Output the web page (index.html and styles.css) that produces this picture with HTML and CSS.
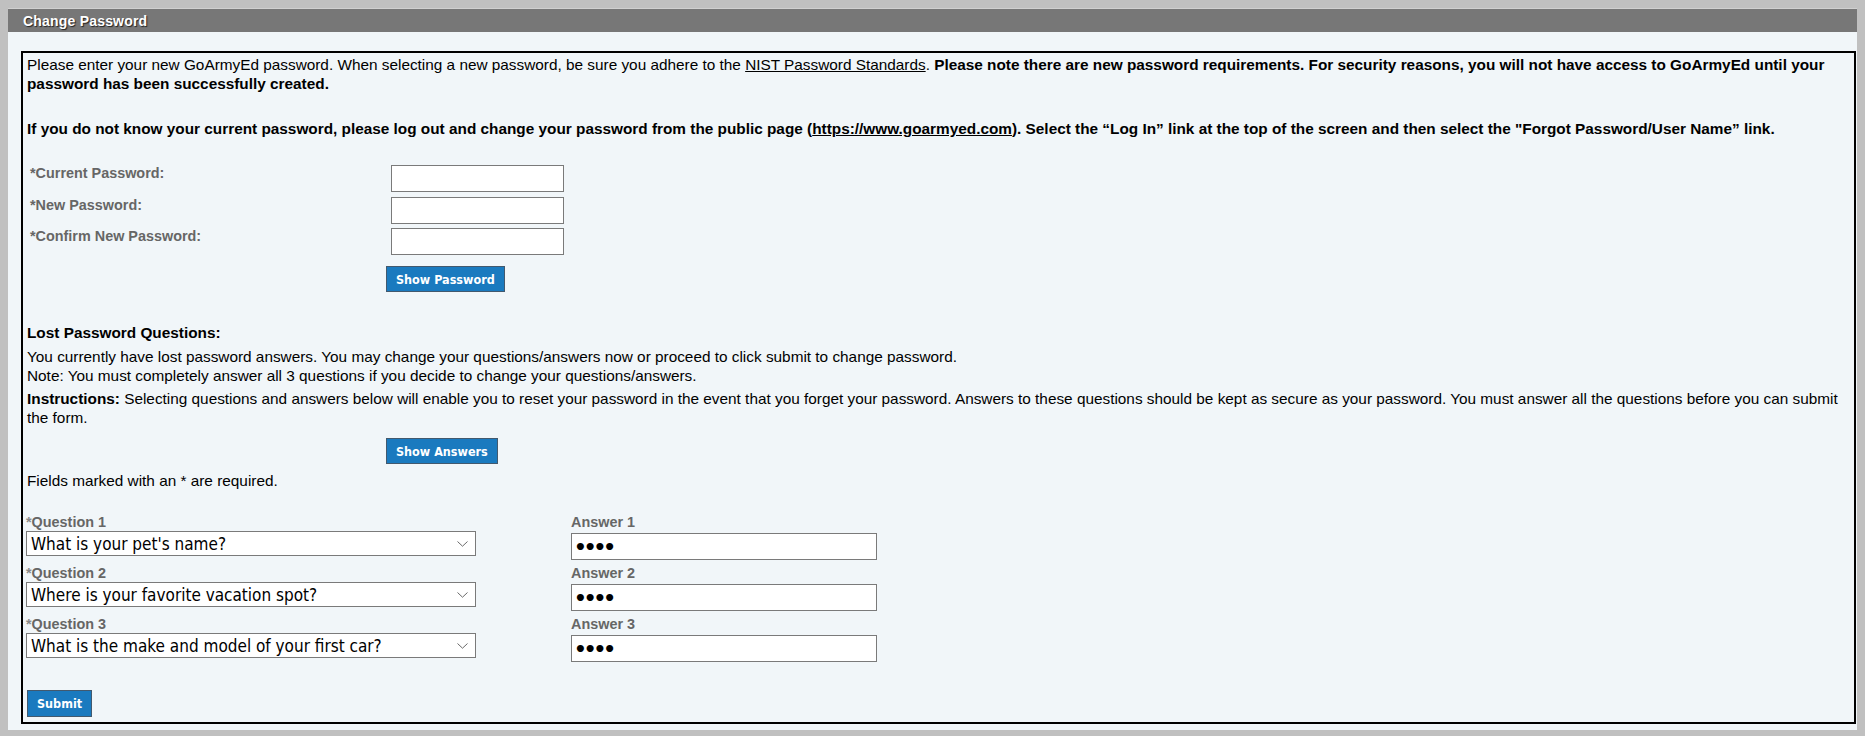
FILE: index.html
```html
<!DOCTYPE html>
<html lang="en">
<head>
    <meta charset="UTF-8">
    <meta name="viewport" content="width=device-width, initial-scale=1.0">
    <title>Change Password</title>
    <link rel="stylesheet" href="styles.css">
</head>
<body>
    <div class="panel">
        <div class="panel-title">Change Password</div>
        <div class="panel-body">
            <div class="content-box">
                <p class="intro">Please enter your new GoArmyEd password. When selecting a new password, be sure you adhere to the <a href="#">NIST Password Standards</a>. <strong>Please note there are new password requirements. For security reasons, you will not have access to GoArmyEd until your password has been successfully created.</strong></p>
                <p class="intro second"><strong>If you do not know your current password, please log out and change your password from the public page (<a href="#">https://www.goarmyed.com</a>). Select the &ldquo;Log In&rdquo; link at the top of the screen and then select the "Forgot Password/User Name&rdquo; link.</strong></p>

                <form id="change-password-form">
                    <div class="pw-grid">
                        <label for="current-password">*Current Password:</label>
                        <input type="password" id="current-password">

                        <label for="new-password">*New Password:</label>
                        <input type="password" id="new-password">

                        <label for="confirm-password">*Confirm New Password:</label>
                        <input type="password" id="confirm-password">
                    </div>
                    <div class="btn-row">
                        <button type="button" class="btn">Show Password</button>
                    </div>

                    <h3 class="section-title">Lost Password Questions:</h3>
                    <p class="lost-text">You currently have lost password answers. You may change your questions/answers now or proceed to click submit to change password.<br>Note: You must completely answer all 3 questions if you decide to change your questions/answers.</p>
                    <p class="lost-text instructions"><strong>Instructions:</strong> Selecting questions and answers below will enable you to reset your password in the event that you forget your password. Answers to these questions should be kept as secure as your password. You must answer all the questions before you can submit the form.</p>
                    <div class="btn-row answers-row">
                        <button type="button" class="btn">Show Answers</button>
                    </div>
                    <p class="required-note">Fields marked with an * are required.</p>

                    <div class="qa-grid">
                        <div class="field">
                            <label for="question-1"><span class="star">*</span>Question 1</label>
                            <div class="select-wrap">
                                <select id="question-1" class="question">
                                    <option selected>What is your pet's name?</option>
                                </select>
                                <svg class="chevron" width="11" height="6" viewBox="0 0 11 6"><path d="M0.5 0.5 L5.5 5.2 L10.5 0.5" fill="none" stroke="#6a6a6a" stroke-width="1"/></svg>
                            </div>
                        </div>
                        <div class="field">
                            <label for="answer-1">Answer 1</label>
                            <input type="password" id="answer-1" class="answer" value="abcd">
                        </div>

                        <div class="field">
                            <label for="question-2"><span class="star">*</span>Question 2</label>
                            <div class="select-wrap">
                                <select id="question-2" class="question">
                                    <option selected>Where is your favorite vacation spot?</option>
                                </select>
                                <svg class="chevron" width="11" height="6" viewBox="0 0 11 6"><path d="M0.5 0.5 L5.5 5.2 L10.5 0.5" fill="none" stroke="#6a6a6a" stroke-width="1"/></svg>
                            </div>
                        </div>
                        <div class="field">
                            <label for="answer-2">Answer 2</label>
                            <input type="password" id="answer-2" class="answer" value="abcd">
                        </div>

                        <div class="field">
                            <label for="question-3"><span class="star">*</span>Question 3</label>
                            <div class="select-wrap">
                                <select id="question-3" class="question">
                                    <option selected>What is the make and model of your first car?</option>
                                </select>
                                <svg class="chevron" width="11" height="6" viewBox="0 0 11 6"><path d="M0.5 0.5 L5.5 5.2 L10.5 0.5" fill="none" stroke="#6a6a6a" stroke-width="1"/></svg>
                            </div>
                        </div>
                        <div class="field">
                            <label for="answer-3">Answer 3</label>
                            <input type="password" id="answer-3" class="answer" value="abcd">
                        </div>
                    </div>

                    <button type="submit" class="btn submit-btn">Submit</button>
                </form>
            </div>
        </div>
    </div>
</body>
</html>
```

FILE: styles.css
```css
body {
    margin: 8px;
    background: #c0c0c0;
    font-family: "Liberation Sans", Arial, sans-serif;
    font-size: 15.35px;
    color: #000;
}
.panel {
    background: #f1f6f9;
    border-top: 1px solid #d0d0d0;
}
.panel-title {
    height: 23px;
    line-height: 24px;
    padding-left: 15px;
    background: #777777;
    color: #fff;
    font-size: 14px;
    font-weight: bold;
    letter-spacing: 0.2px;
    text-shadow: 1px 1px 1px #222;
}
.panel-body {
    padding: 19px 1px 6px 13px;
}
.content-box {
    border: 2px solid #000;
    padding: 2px 4px 5px;
    line-height: 19px;
}
p {
    margin: 0;
}
a {
    color: #000;
}
.intro.second {
    margin-top: 26px;
}
.pw-grid {
    display: grid;
    grid-template-columns: 359px 180px;
    row-gap: 4.5px;
    margin-top: 27px;
}
.pw-grid label,
.field label {
    color: #666;
    font-size: 14.4px;
    font-weight: bold;
    line-height: 17px;
}
.pw-grid label {
    padding-left: 3px;
}
.pw-grid input {
    width: 173px;
    height: 27px;
    margin-left: 5px;
    box-sizing: border-box;
    border: 1px solid #7a7a7a;
    background: #fff;
}
.btn-row {
    padding-left: 359px;
    margin-top: 11px;
}
.btn {
    height: 26px;
    padding: 0 9px;
    background: #1a7abf;
    color: #fff;
    border: 1px solid #42596e;
    font-family: "DejaVu Sans Condensed", "DejaVu Sans", sans-serif;
    font-stretch: condensed;
    font-size: 12.5px;
    font-weight: bold;
    cursor: pointer;
}
.section-title {
    margin: 31px 0 0;
    font-size: 15.35px;
    line-height: 19px;
}
.lost-text {
    margin-top: 5px;
}
.lost-text.instructions {
    margin-top: 4px;
}
.answers-row {
    margin-top: 11px;
}
.required-note {
    margin-top: 7px;
}
.qa-grid {
    display: grid;
    grid-template-columns: 450px 306px;
    column-gap: 95px;
    row-gap: 5px;
    margin: 24px 0 0 -1px;
}
.field {
    display: flex;
    flex-direction: column;
    height: 46px;
}
.field .star {
    color: #8a8a8a;
}
.select-wrap {
    position: relative;
    width: 450px;
    height: 25px;
}
.question {
    width: 450px;
    height: 25px;
    padding: 0 28px 0 4px;
    border: 1px solid #7a7a7a;
    border-radius: 0;
    background: #fff;
    -webkit-appearance: none;
    appearance: none;
    font-family: "DejaVu Sans Condensed", "DejaVu Sans", sans-serif;
    font-stretch: condensed;
    font-size: 17px;
    color: #000;
}
.chevron {
    position: absolute;
    right: 8px;
    top: 10px;
    pointer-events: none;
}
.answer {
    width: 306px;
    height: 27px;
    margin-top: 2px;
    box-sizing: border-box;
    padding: 0 2px;
    border: 1px solid #7a7a7a;
    background: #fff;
    font-family: "DejaVu Sans", sans-serif;
    font-size: 20px;
    font-weight: bold;
    letter-spacing: -3px;
}
.submit-btn {
    height: 27px;
    margin-top: 28px;
}
```
